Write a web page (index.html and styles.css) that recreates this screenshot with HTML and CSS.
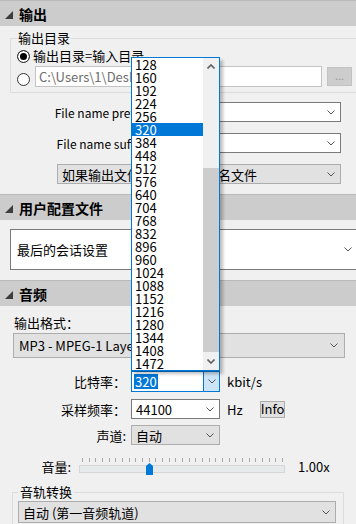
FILE: index.html
```html
<!DOCTYPE html>
<html lang="zh">
<head>
  <meta charset="UTF-8">
  <title>输出设置</title>
  <link rel="stylesheet" href="styles.css">
</head>
<body>
  <div class="panel">
    <!-- 输出 -->
    <div class="sec-head">
      <svg class="tri" viewBox="0 0 8 8"><polygon points="8,0 8,8 0,8" fill="#3c3c3c"/></svg>输出
    </div>
    <div class="sec-body out">
      <fieldset class="group dir">
        <legend>输出目录</legend>
        <div class="radio-row first">
          <span class="radio on"></span><span class="radio-text">输出目录=输入目录</span>
        </div>
        <div class="radio-row second">
          <span class="radio low"></span>
          <div class="path">C:\Users\1\Desktop\</div>
          <button class="browse" type="button">...</button>
        </div>
      </fieldset>

      <div class="frow top">
        <label class="lbl">File name prefix:</label>
        <div class="sel pre">
          <span></span>
          <svg class="chev" viewBox="0 0 8 5"><polyline points="0.5,0.5 4,4 7.5,0.5"/></svg>
        </div>
      </div>
      <div class="frow">
        <label class="lbl">File name suffix:</label>
        <div class="sel pre">
          <span></span>
          <svg class="chev" viewBox="0 0 8 5"><polyline points="0.5,0.5 4,4 7.5,0.5"/></svg>
        </div>
      </div>
      <div class="frow">
        <div class="sel gray exist">
          <span>如果输出文件已存在则重命名文件</span>
          <svg class="chev" viewBox="0 0 8 5"><polyline points="0.5,0.5 4,4 7.5,0.5"/></svg>
        </div>
      </div>
    </div>

    <!-- 用户配置文件 -->
    <div class="sec-head">
      <svg class="tri" viewBox="0 0 8 8"><polygon points="8,0 8,8 0,8" fill="#3c3c3c"/></svg>用户配置文件
    </div>
    <div class="sec-body prof">
      <div class="sel big">
        <span>最后的会话设置</span>
        <svg class="chev" viewBox="0 0 8 5"><polyline points="0.5,0.5 4,4 7.5,0.5"/></svg>
      </div>
    </div>

    <!-- 音频 -->
    <div class="sec-head">
      <svg class="tri" viewBox="0 0 8 8"><polygon points="8,0 8,8 0,8" fill="#3c3c3c"/></svg>音频
    </div>
    <div class="sec-body audio">
      <div class="fmt-lbl">输出格式：</div>
      <div class="sel gray fmt">
        <span>MP3 - MPEG-1 Layer III</span>
        <svg class="chev" viewBox="0 0 8 5"><polyline points="0.5,0.5 4,4 7.5,0.5"/></svg>
      </div>

      <div class="arow bitrate">
        <label class="lbl">比特率：</label>
        <div class="sel combo focus">
          <span class="hl">320</span>
          <span class="drop-btn">
            <svg class="chev" viewBox="0 0 8 5"><polyline points="0.5,0.5 4,4 7.5,0.5"/></svg>
          </span>
        </div>
        <span class="unit">kbit/s</span>
      </div>
      <div class="arow rate">
        <label class="lbl">采样频率：</label>
        <div class="sel combo">
          <span>44100</span>
          <svg class="chev" viewBox="0 0 8 5"><polyline points="0.5,0.5 4,4 7.5,0.5"/></svg>
        </div>
        <span class="unit">Hz</span>
        <button class="info" type="button">Info</button>
      </div>
      <div class="arow chan">
        <label class="lbl">声道:</label>
        <div class="sel gray combo">
          <span>自动</span>
          <svg class="chev" viewBox="0 0 8 5"><polyline points="0.5,0.5 4,4 7.5,0.5"/></svg>
        </div>
      </div>

      <div class="vrow">
        <label class="vlbl">音量:</label>
        <div class="slider">
          <svg class="ticks" viewBox="0 0 206 4">
            <path d="M3.5 0v4M10.5 0v4M16.5 0v4M23.5 0v4M30.5 0v4M36.5 0v4M43.5 0v4M50.5 0v4M56.5 0v4M63.5 0v4M70.5 0v4M76.5 0v4M83.5 0v4M90.5 0v4M96.5 0v4M103.5 0v4M110.5 0v4M116.5 0v4M123.5 0v4M130.5 0v4M136.5 0v4M143.5 0v4M150.5 0v4M156.5 0v4M163.5 0v4M170.5 0v4M176.5 0v4M183.5 0v4M190.5 0v4M196.5 0v4M203.5 0v4"/>
          </svg>
          <div class="track"></div>
          <svg class="thumb" viewBox="0 0 7 12"><polygon points="0,3 3.5,0 7,3 7,12 0,12" fill="#0078d7"/></svg>
        </div>
        <span class="vol-val">1.00x</span>
      </div>

      <fieldset class="group tracks">
        <legend>音轨转换</legend>
        <div class="sel gray track-sel">
          <span>自动 (第一音频轨道)</span>
          <svg class="chev" viewBox="0 0 8 5"><polyline points="0.5,0.5 4,4 7.5,0.5"/></svg>
        </div>
      </fieldset>
    </div>

    <!-- 比特率下拉列表 -->
    <div class="popup">
      <ul class="items">
        <li>128</li><li>160</li><li>192</li><li>224</li><li>256</li>
        <li class="cur">320</li><li>384</li><li>448</li><li>512</li><li>576</li>
        <li>640</li><li>704</li><li>768</li><li>832</li><li>896</li>
        <li>960</li><li>1024</li><li>1088</li><li>1152</li><li>1216</li>
        <li>1280</li><li>1344</li><li>1408</li><li>1472</li>
      </ul>
      <div class="sbar">
        <div class="sb-btn">
          <svg class="arrow" viewBox="0 0 8 5"><polyline points="0.5,4.5 4,1 7.5,4.5"/></svg>
        </div>
        <div class="sb-track"><div class="sb-thumb"></div></div>
        <div class="sb-btn">
          <svg class="arrow" viewBox="0 0 8 5"><polyline points="0.5,0.5 4,4 7.5,0.5"/></svg>
        </div>
      </div>
    </div>
  </div>
</body>
</html>
```

FILE: styles.css
```css
/* base */
* {
  box-sizing: border-box;
}

body {
  margin: 0;
  width: 356px;
  height: 524px;
  overflow: hidden;
  background-color: #f0f0f0;
  font-family: "Noto Sans CJK SC", "Noto Sans", sans-serif;
  font-size: 13px;
  color: #000;
}

.panel {
  position: relative;
  width: 356px;
  overflow: hidden;
}

/* section headers */
.sec-head {
  height: 26px;
  border-top: 1px solid #b9b9b9;
  background-color: #cccccc;
  display: flex;
  align-items: center;
  padding-left: 5px;
  font-size: 14px;
  font-weight: bold;
  line-height: 16px;
}

.tri {
  width: 8px;
  height: 8px;
  margin: 2px 6px 0 0;
}

/* group boxes */
.group {
  margin: 0;
  border: 1px solid #dcdcdc;
  min-width: 0;
}

.group legend {
  line-height: 16px;
}

/* output section */
.out {
  padding: 4px 0 10px;
}

.dir {
  margin-left: 10px;
  border-right: none;
  padding: 0 0 5px 6px;
}

.dir legend {
  padding: 0 1px;
}

.radio-row {
  display: flex;
  align-items: center;
  margin-top: 2px;
}

.radio-row.first {
  height: 16px;
}

.radio-row.second {
  height: 21px;
}

.radio {
  flex: none;
  width: 13px;
  height: 13px;
  border: 1px solid #333;
  border-radius: 50%;
  background-color: #fff;
}

.radio.on {
  background-color: #000;
  box-shadow: inset 0 0 0 2px #fff;
}

.radio.low {
  align-self: flex-end;
  margin-bottom: 1px;
}

.radio-text {
  margin-left: 3px;
  line-height: 16px;
}

.path {
  margin-left: 5px;
  width: 287px;
  height: 21px;
  border: 1px solid #c4c4c4;
  background-color: #fff;
  color: #6d6d6d;
  padding-left: 3px;
  line-height: 19px;
  white-space: nowrap;
  overflow: hidden;
}

.browse {
  margin-left: 5px;
  width: 25px;
  height: 19px;
  padding: 0 0 2px;
  border: 1px solid #c2c2c2;
  background-color: #cdcdcd;
  color: #9a9a9a;
  font-family: inherit;
  font-size: 11px;
  line-height: 15px;
}

.frow {
  display: flex;
  align-items: center;
  height: 20px;
  margin-top: 11px;
}

.frow.top {
  margin-top: 9px;
}

.frow .lbl {
  flex: none;
  width: 147px;
  text-align: right;
  font-size: 12px;
}

/* select boxes */
.sel {
  display: flex;
  align-items: center;
  justify-content: space-between;
  height: 20px;
  border: 1px solid #7a7a7a;
  background-color: #fff;
  padding: 0 5px 0 4px;
  white-space: nowrap;
}

.sel.gray {
  background-color: #e1e1e1;
  border-color: #adadad;
}

.chev {
  flex: none;
  width: 8px;
  height: 5px;
  fill: none;
  stroke: #555;
  stroke-width: 1;
}

.sel.pre {
  margin-left: 5px;
  width: 189px;
}

.sel.exist {
  margin-left: 57px;
  width: 284px;
}

/* profile section */
.prof {
  padding: 9px 0 10px 10px;
}

.sel.big {
  width: 350px;
  height: 41px;
  padding: 0 7px 0 6px;
}

/* audio section */
.audio {
  padding-top: 8px;
}

.fmt-lbl {
  margin-left: 14px;
  line-height: 18px;
}

.sel.fmt {
  margin: 1px 0 0 13px;
  width: 332px;
  height: 25px;
  padding: 0 6px 0 5px;
}

.arow {
  display: flex;
  align-items: center;
}

.arow .lbl {
  flex: none;
  width: 126px;
  text-align: right;
}

.sel.combo {
  margin-left: 5px;
  width: 89px;
  padding-right: 5px;
}

.bitrate {
  margin-top: 13px;
  height: 21px;
}

.bitrate .sel.combo {
  height: 21px;
}

.rate {
  margin-top: 7px;
  height: 20px;
}

.chan {
  margin-top: 6px;
  height: 20px;
}

.sel.focus {
  border-color: #0078d7;
  padding: 0 0 0 2px;
}

.hl {
  background-color: #0078d7;
  color: #fff;
  line-height: 15px;
  padding: 0 1px;
}

.drop-btn {
  width: 16px;
  height: 100%;
  display: flex;
  align-items: center;
  justify-content: center;
  background-color: #cce4f7;
  border-left: 1px solid #0078d7;
}

.unit {
  margin-left: 7px;
}

.info {
  margin-left: 17px;
  width: 25px;
  height: 17px;
  padding: 0;
  border: 1px solid #adadad;
  background-color: #e1e1e1;
  font-family: inherit;
  font-size: 13px;
  line-height: 14px;
}

/* volume slider */
.vrow {
  display: flex;
  align-items: center;
  margin-top: 12px;
  height: 19px;
}

.vlbl {
  flex: none;
  width: 71px;
  text-align: right;
}

.slider {
  position: relative;
  margin-left: 8px;
  width: 206px;
  height: 19px;
}

.ticks {
  display: block;
  margin-top: 1px;
  width: 206px;
  height: 4px;
  stroke: #a8a8a8;
  stroke-width: 1;
}

.track {
  margin-top: 3px;
  height: 8px;
  border: 1px solid #d6d6d6;
  background-color: #e7eaea;
}

.thumb {
  position: absolute;
  left: 67px;
  top: 6px;
  width: 7px;
  height: 12px;
}

.vol-val {
  margin-left: 13px;
}

.tracks {
  margin: 8px 0 0 12px;
  width: 332px;
  padding: 0 0 6px 5px;
}

.tracks legend {
  padding: 0 2px;
}

.sel.track-sel {
  margin-top: 1px;
  width: 318px;
  height: 22px;
}

/* dropdown list */
.popup {
  position: absolute;
  left: 131px;
  top: 57px;
  width: 89px;
  height: 314px;
  display: flex;
  border: 1px solid #0078d7;
  background-color: #fff;
  box-shadow: 3px 3px 3px rgba(0, 0, 0, 0.25);
}

.items {
  flex: 1;
  margin: 0;
  padding: 0;
  list-style: none;
}

.items li {
  height: 13px;
  line-height: 13px;
  padding-left: 3px;
}

.items li.cur {
  background-color: #0078d7;
  color: #fff;
}

.sbar {
  width: 16px;
  display: flex;
  flex-direction: column;
  background-color: #f0f0f0;
}

.sb-btn {
  height: 17px;
  display: flex;
  align-items: center;
  justify-content: center;
}

.arrow {
  width: 8px;
  height: 5px;
  fill: none;
  stroke: #606060;
  stroke-width: 1.6;
}

.sb-track {
  flex: 1;
}

.sb-thumb {
  margin-top: 93px;
  height: 184px;
  background-color: #cdcdcd;
}
```
